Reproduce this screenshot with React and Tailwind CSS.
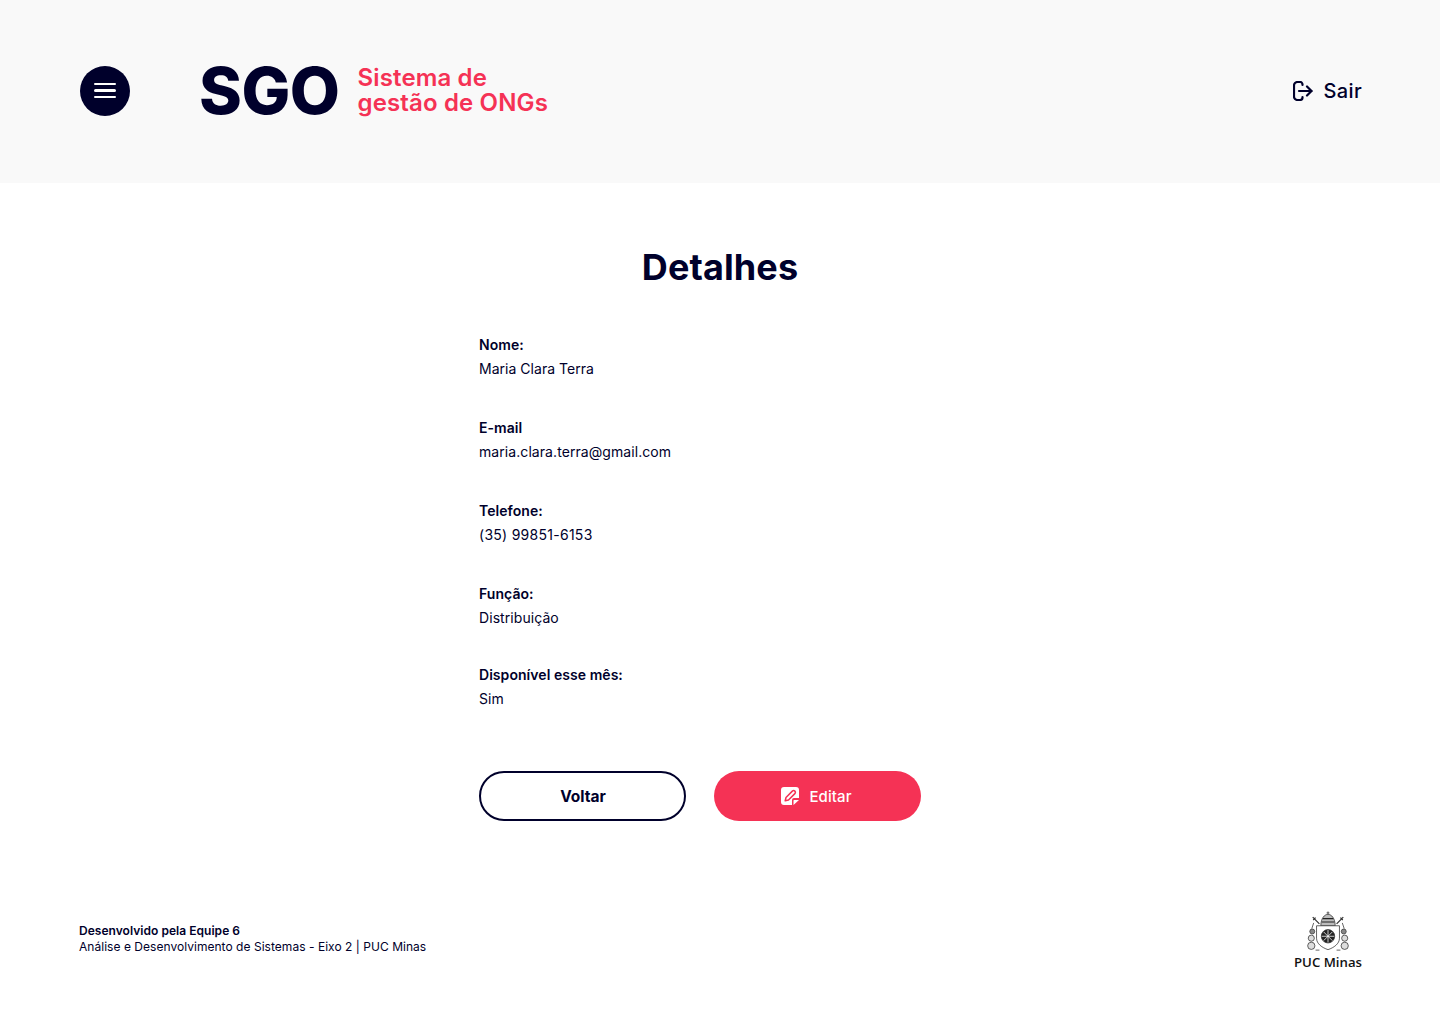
const details = [
  { label: "Nome:", value: "Maria Clara Terra", mb: "mb-[35px]", track: "tracking-[0.03px]" },
  { label: "E-mail", value: "maria.clara.terra@gmail.com", mb: "mb-[35px]", track: "tracking-[0.07px]" },
  { label: "Telefone:", value: "(35) 99851-6153", mb: "mb-[35px]", track: "tracking-[0.27px]" },
  { label: "Função:", value: "Distribuição", mb: "mb-[33px]", track: "tracking-[0.07px]" },
  { label: "Disponível esse mês:", value: "Sim", mb: "mb-0", track: "tracking-[0.07px]" },
];

function MenuButton() {
  return (
    <button className="w-[50px] h-[50px] rounded-full bg-[#00002b] flex flex-col items-center justify-center gap-[4px]">
      <span className="block w-[22px] h-[2.5px] rounded-full bg-white" />
      <span className="block w-[22px] h-[2.5px] rounded-full bg-white" />
      <span className="block w-[22px] h-[2.5px] rounded-full bg-white" />
    </button>
  );
}

function LogoutIcon() {
  return (
    <svg width="20" height="20" viewBox="0 0 20 20" fill="none" stroke="#00002b" strokeWidth="2.2" strokeLinecap="round" strokeLinejoin="round">
      <path d="M9.5 4 V3.5 A2.5 2.5 0 0 0 7 1 H4.5 A3.5 3.5 0 0 0 1 4.5 V15.5 A3.5 3.5 0 0 0 4.5 19 H7 A2.5 2.5 0 0 0 9.5 16.5 V16" />
      <path d="M6 10 H18.5" />
      <path d="M14 5.5 L18.5 10 L14 14.5" />
    </svg>
  );
}

function EditIcon() {
  return (
    <svg width="18" height="18" viewBox="0 0 18 18">
      <path d="M3 0 H15 A3 3 0 0 1 18 3 V11 H13 A2 2 0 0 0 11 13 V18 H3 A3 3 0 0 1 0 15 V3 A3 3 0 0 1 3 0 Z" fill="white" />
      <path d="M12.5 18 V13.6 A.6 .6 0 0 1 13.1 13 H18 Z" fill="white" />
      <path d="M4.2 13.8 L5 10.5 L11.6 3.9 A1.8 1.8 0 0 1 14.1 6.4 L7.5 13 Z" fill="none" stroke="#f53255" strokeWidth="1.5" strokeLinejoin="round" />
    </svg>
  );
}

function PucLogo() {
  return (
    <div className="flex flex-col items-center w-[68px]">
      <svg width="42" height="41" viewBox="0 0 44 42" fill="none" stroke="#333" strokeWidth="0.8">
        {/* tiara */}
        <path d="M22 0 V3 M20.5 1.5 H23.5" />
        <path d="M14.5 15 C14.5 7 18.5 3 22 3 C25.5 3 29.5 7 29.5 15 Z" fill="#bbb" />
        <path d="M15.5 11 H28.5 M16.5 7.5 L27.5 7.5" stroke="#222" strokeWidth="1.1" />
        {/* keys */}
        <path d="M13 13 L6 6 M31 13 L38 6 M9 6.5 L6.5 9 M35 6.5 L37.5 9" strokeWidth="1.3" />
        {/* shield */}
        <path d="M10 15 H34 V28 C34 34 28 38 22 40 C16 38 10 34 10 28 Z" fill="#fff" />
        <circle cx="22" cy="26" r="7" fill="#222" />
        <path d="M22 19.5 V32.5 M15.5 26 H28.5 M17.5 21.5 L26.5 30.5 M26.5 21.5 L17.5 30.5" stroke="#fff" strokeWidth="0.8" />
        {/* side tassels */}
        <path d="M7 12 L5 18 M37 12 L39 18" />
        <circle cx="5.5" cy="21" r="2.6" fill="#888" />
        <circle cx="38.5" cy="21" r="2.6" fill="#888" />
        <circle cx="4.5" cy="28" r="3.2" fill="#ddd" />
        <circle cx="39.5" cy="28" r="3.2" fill="#ddd" />
        <circle cx="4.5" cy="36" r="3.8" fill="#ddd" />
        <circle cx="39.5" cy="36" r="3.8" fill="#ddd" />
        <path d="M9 40.5 H13 M31 40.5 H35" />
      </svg>
      <span className="font-['Open_Sans',sans-serif] text-[13.2px] leading-[16px] font-semibold text-[#111] mt-[2px] whitespace-nowrap">PUC Minas</span>
    </div>
  );
}

export default function App() {
  return (
    <div className="min-h-[1024px] bg-white font-['Inter',sans-serif] text-[#00002b]">
      <header className="h-[183px] bg-[#f9f9f9] pl-20 pr-[78px] pb-[2px] flex items-center">
        <MenuButton />
        <div className="flex items-center ml-[69px]">
          <span className="text-[65px] leading-none font-extrabold tracking-[-0.5px]">SGO</span>
          <div className="ml-[18px] text-[24px] leading-[25px] font-semibold tracking-[0.14px] text-[#f53255] -mt-[1px]">
            <div>Sistema de</div>
            <div>gestão de ONGs</div>
          </div>
        </div>
        <div className="ml-auto flex items-center gap-[11px]">
          <LogoutIcon />
          <span className="text-[20px] font-medium tracking-[0.35px]">Sair</span>
        </div>
      </header>

      <main className="w-[482px] mx-auto pt-[62px]">
        <h1 className="text-[36px] leading-[44px] font-bold text-center tracking-[0.1px]">Detalhes</h1>
        <div className="mt-[44px]">
          {details.map((item) => (
            <div key={item.label} className={item.mb}>
              <div className="text-[14px] leading-[24px] font-semibold tracking-[0.05px]">{item.label}</div>
              <div className={`text-[14px] leading-[24px] ${item.track}`}>{item.value}</div>
            </div>
          ))}
        </div>
        <div className="flex gap-[28px] mt-[60px]">
          <button className="w-[207px] h-[50px] rounded-full border-2 border-[#00002b] pt-[2px] pl-[1px] text-[15.5px] font-bold bg-white">Voltar</button>
          <button className="w-[207px] h-[50px] rounded-full bg-[#f53255] text-white text-[15px] font-medium tracking-[0.1px] pr-[2px] flex items-center justify-center gap-[10px]">
            <EditIcon />
            <span className="pt-[2px]">Editar</span>
          </button>
        </div>
      </main>

      <footer className="flex items-center justify-between pl-[79px] pr-[78px] mt-[90px]">
        <div className="text-[12px] leading-[16px] tracking-[0.035px] -mt-[4px]">
          <div className="font-semibold">Desenvolvido pela Equipe 6</div>
          <div>Análise e Desenvolvimento de Sistemas - Eixo 2 | PUC Minas</div>
        </div>
        <PucLogo />
      </footer>
    </div>
  );
}
